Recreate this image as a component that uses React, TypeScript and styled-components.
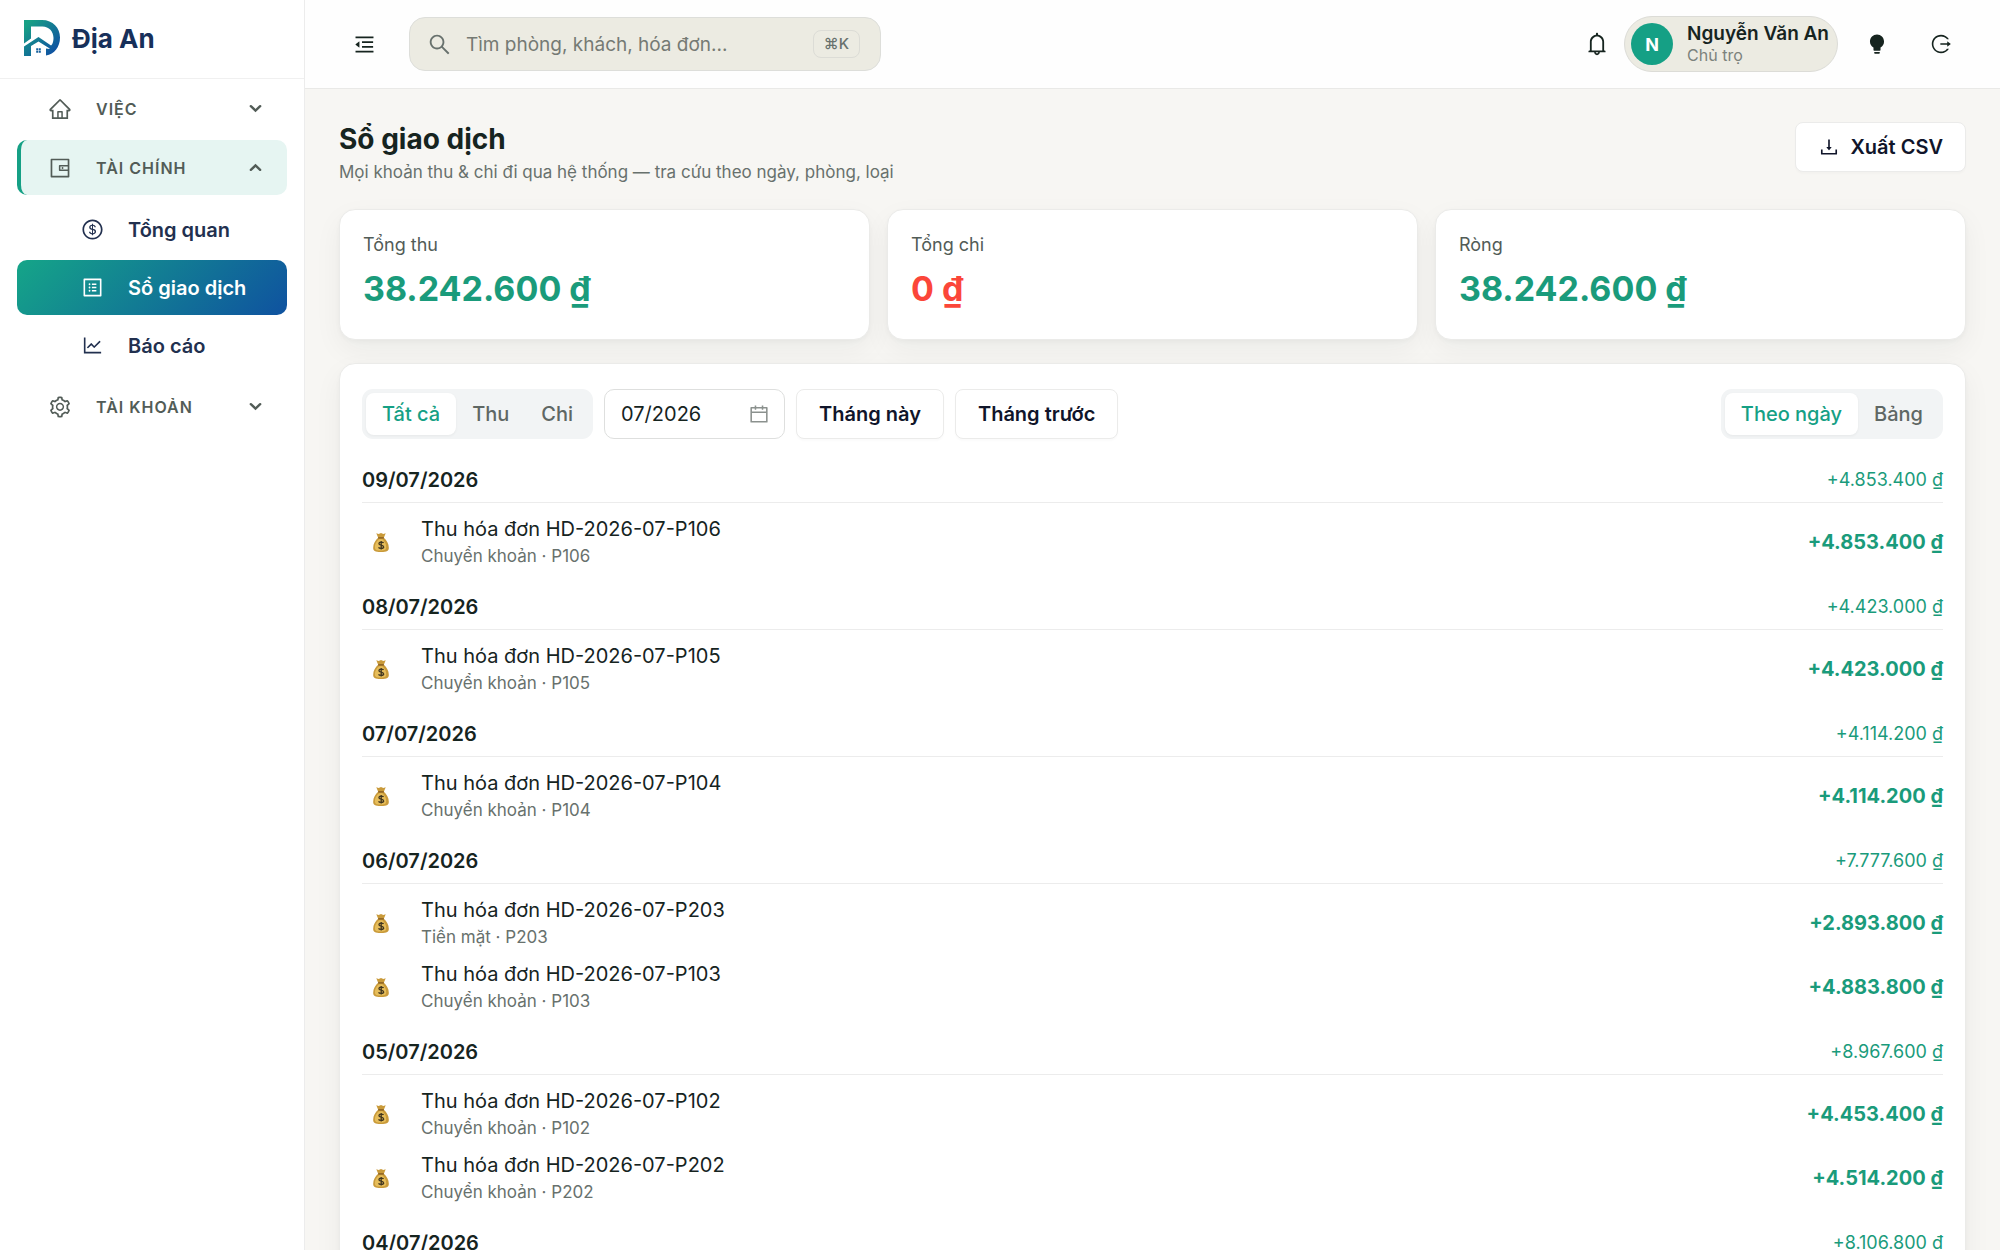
import React from 'react';
import styled, { createGlobalStyle } from 'styled-components';
import {
  AiOutlineHome, AiOutlineWallet, AiOutlineDollarCircle, AiOutlineProfile, AiOutlineLineChart,
  AiOutlineSetting, AiOutlineMenuFold, AiOutlineSearch, AiOutlineBell, AiFillBulb, AiOutlineLogout,
  AiOutlineDownload, AiOutlineCalendar,
} from 'react-icons/ai';

const c = {
  green: '#15a085',
  income: '#1a9b7b',
  danger: '#fb4639',
  ink: '#16241f',
  navy: '#22304f',
  muted: '#68716d',
  soft: '#525c57',
  line: '#ececec',
  page: '#f7f6f3',
  chip: '#ecebe2',
};

const GlobalStyle = createGlobalStyle`
  *, *::before, *::after { box-sizing: border-box; }
  body { margin: 0; background: ${c.page}; color: ${c.ink}; font-family: Inter, "Noto Sans", sans-serif; font-size: 18px; }
  button, input { font: inherit; color: inherit; }
  button { cursor: pointer; }
  h1, h2, p, ul { margin: 0; padding: 0; }
  ul { list-style: none; }
  svg { display: block; flex: none; }
`;

const Shell = styled.div`
  display: grid;
  grid-template-columns: 305px minmax(0, 1fr);
  height: 100vh;
  overflow: hidden;
`;

const Sidebar = styled.aside`
  background: #fff;
  border-right: 1px solid ${c.line};
`;

const Brand = styled.a`
  display: flex;
  align-items: center;
  gap: 12px;
  height: 79px;
  padding: 0 24px 2px;
  border-bottom: 1px solid #f0f0f0;
  color: #17305a;
  font-size: 26px;
  font-weight: 700;
  text-decoration: none;
`;

const Menu = styled.ul`
  display: flex;
  flex-direction: column;
  gap: 4px;
  && { padding: 2px 17px; }
`;

const SubMenu = styled.ul`
  display: flex;
  flex-direction: column;
  gap: 3px;
  && { padding: 7px 0 2px; }
`;

const GroupButton = styled.button<{ $open?: boolean }>`
  display: flex;
  align-items: center;
  width: 100%;
  height: 55px;
  padding: 0 25px 0 27px;
  border: 0;
  border-left: 4px solid ${p => (p.$open ? c.green : 'transparent')};
  border-radius: 10px;
  background: ${p => (p.$open ? '#e6f5f2' : 'transparent')};
  color: ${c.soft};
  font-size: 16px;
  font-weight: 600;
  letter-spacing: 1px;
  text-align: left;
`;

const GroupLabel = styled.span`
  flex: 1;
  margin-left: 24px;
`;

const SubLink = styled.a<{ $active?: boolean }>`
  display: flex;
  align-items: center;
  gap: 24px;
  height: 55px;
  padding-left: 64px;
  border-radius: 10px;
  background: ${p => (p.$active ? 'linear-gradient(135deg, #15a588 0%, #0f52a0 100%)' : 'transparent')};
  color: ${p => (p.$active ? '#fff' : c.navy)};
  font-size: 20px;
  font-weight: 600;
  text-decoration: none;
`;

const Body = styled.div`
  display: flex;
  flex-direction: column;
  min-width: 0;
  min-height: 0;
`;

const Topbar = styled.header`
  display: flex;
  align-items: center;
  height: 89px;
  flex: none;
  padding: 0 34px;
  background: #fefefe;
  border-bottom: 1px solid #e9e9e7;
`;

const Actions = styled.div`
  display: flex;
  align-items: center;
  gap: 14px;
`;

const Account = styled.div`
  display: flex;
  align-items: center;
  gap: 2px;
`;

const IconButton = styled.button`
  display: grid;
  place-items: center;
  width: 50px;
  height: 50px;
  padding: 0;
  border: 0;
  background: none;
`;

const Search = styled.label`
  display: flex;
  align-items: center;
  gap: 14px;
  width: 472px;
  height: 54px;
  margin: 0 auto 0 20px;
  padding: 0 20px 0 17px;
  border: 1px solid #dddeda;
  border-radius: 16px;
  background: ${c.chip};
  color: ${c.muted};
`;

const SearchInput = styled.input`
  flex: 1;
  min-width: 0;
  padding: 0;
  border: 0;
  outline: 0;
  background: none;
  font-size: 19px;
  &::placeholder { color: #757a74; opacity: 1; }
`;

const Key = styled.kbd`
  padding: 4px 10px;
  border: 1px solid #dcdcd6;
  border-radius: 8px;
  font: 500 15px/18px Inter, "DejaVu Sans", sans-serif;
`;

const UserChip = styled.button`
  display: flex;
  align-items: center;
  gap: 14px;
  height: 56px;
  padding: 0 8px 0 6px;
  border: 1px solid #dcdcd7;
  border-radius: 28px;
  background: ${c.chip};
  text-align: left;
`;

const Avatar = styled.span`
  display: grid;
  place-items: center;
  width: 42px;
  height: 42px;
  border-radius: 50%;
  background: ${c.green};
  color: #fff;
  font-size: 18px;
  font-weight: 700;
`;

const UserText = styled.span`
  display: flex;
  flex-direction: column;
  font-size: 19px;
  line-height: 22px;
  font-weight: 600;
`;

const Role = styled.small`
  color: #7c827c;
  font-size: 16px;
  line-height: 20px;
  font-weight: 400;
`;

const Main = styled.main`
  display: flex;
  flex-direction: column;
  padding: 33px 34px 0;
`;

const PageHead = styled.div`
  display: flex;
  justify-content: space-between;
  align-items: flex-start;
  margin-bottom: 25px;
`;

const Title = styled.h1`
  font-size: 28px;
  line-height: 34px;
  font-weight: 700;
`;

const Subtitle = styled.p`
  margin-top: 4px;
  color: ${c.muted};
  font-size: 17px;
  line-height: 24px;
`;

const Button = styled.button`
  display: flex;
  align-items: center;
  justify-content: center;
  gap: 10px;
  height: 50px;
  padding: 0 22px;
  border: 1px solid #ebebea;
  border-radius: 8px;
  background: #fff;
  box-shadow: 0 2px 2px rgba(0, 0, 0, 0.02);
  color: #10152a;
  font-size: 20px;
  font-weight: 600;
  white-space: nowrap;
`;

const Stats = styled.section`
  display: grid;
  grid-template-columns: repeat(3, minmax(0, 1fr));
  gap: 17px;
  margin-bottom: 23px;
`;

const Card = styled.section`
  border: 1px solid #ebebe9;
  border-radius: 16px;
  background: #fff;
  box-shadow: 0 2px 4px rgba(20, 40, 30, 0.03), 0 10px 28px rgba(20, 40, 30, 0.05);
`;

const StatCard = styled(Card)`
  height: 131px;
  padding: 22px 23px;
`;

const StatLabel = styled.p`
  color: ${c.soft};
  font-size: 18px;
  line-height: 26px;
`;

const StatValue = styled.p<{ $tone: string }>`
  margin-top: 9px;
  color: ${p => p.$tone};
  font-size: 34px;
  line-height: 44px;
  font-weight: 700;
`;

const Ledger = styled(Card)`
  padding: 25px 22px;
`;

const Toolbar = styled.div`
  display: flex;
  align-items: center;
  gap: 11px;
  margin-bottom: 24px;
`;

const Segmented = styled.div<{ $end?: boolean }>`
  display: flex;
  height: 50px;
  margin-left: ${p => (p.$end ? 'auto' : '0')};
  padding: 4px;
  border-radius: 11px;
  background: #f2f4f5;
`;

const Segment = styled.button<{ $on?: boolean }>`
  padding: 0 16px;
  border: 0;
  border-radius: 8px;
  background: ${p => (p.$on ? '#fff' : 'transparent')};
  box-shadow: ${p => (p.$on ? '0 1px 3px rgba(0, 0, 0, 0.05)' : 'none')};
  color: ${p => (p.$on ? c.green : '#5f6764')};
  font-size: 20px;
  font-weight: 500;
`;

const MonthField = styled.label`
  display: flex;
  align-items: center;
  width: 181px;
  height: 50px;
  padding: 0 14px 0 16px;
  border: 1px solid #dedfde;
  border-radius: 10px;
  color: #8b918e;
`;

const MonthInput = styled.input`
  flex: 1;
  min-width: 0;
  padding: 0;
  border: 0;
  outline: 0;
  background: none;
  color: ${c.ink};
  font-size: 20px;
`;

const Day = styled.section`
  margin-bottom: 16px;
`;

const DayHead = styled.div`
  display: flex;
  justify-content: space-between;
  align-items: center;
  height: 40px;
  padding-bottom: 6px;
  margin-bottom: 7px;
  border-bottom: 1px solid ${c.line};
`;

const DayTitle = styled.h2`
  font-size: 20px;
  font-weight: 600;
`;

const DayTotal = styled.span`
  color: ${c.income};
  font-size: 18px;
`;

const Entry = styled.li`
  display: flex;
  align-items: center;
  height: 64px;
`;

const EntryIcon = styled.span`
  display: grid;
  place-items: center;
  width: 37px;
  margin-right: 22px;
`;

const EntryText = styled.div`
  flex: 1;
`;

const EntryTitle = styled.p`
  font-size: 20px;
  line-height: 28px;
`;

const EntryMeta = styled.p`
  color: ${c.muted};
  font-size: 17px;
  line-height: 26px;
`;

const EntryAmount = styled.strong`
  color: ${c.income};
  font-size: 20px;
  font-weight: 700;
`;

function Logo() {
  return (
    <svg width="36" height="36" viewBox="0 0 36 36" aria-hidden="true">
      <defs>
        <linearGradient id="brand" x1="0" y1="0" x2="1" y2="1">
          <stop offset="0.1" stopColor="#17a085" />
          <stop offset="0.9" stopColor="#0f4fa3" />
        </linearGradient>
      </defs>
      <path
        fill="url(#brand)"
        d="M0 0H18C29 0 36 8 36 17.500C36 27 30.500 34 22 35.500V28.500L25.500 29V27L28 24.500C29.200 22.500 29.500 20 29.500 18C29.500 11.500 25 6.500 18.500 6.500H7V18.500L0 23.500ZM0 26.500L14.500 17L28.500 26.500L26.500 29L14.500 21.500L7 26V36H0Z"
      />
      <path fill="#155f9c" d="M12.200 28.200h2v2h-2zM14.800 28.200h2v2h-2zM12.200 30.800h2v2h-2zM14.800 30.800h2v2h-2z" />
    </svg>
  );
}

function Chevron({ up = false }: { up?: boolean }) {
  return (
    <svg width="13" height="13" viewBox="0 0 14 14" fill="none" stroke="currentColor" strokeWidth="2.600" strokeLinecap="round" aria-hidden="true">
      <path d={up ? 'M2 9.500L7 4.800L12 9.500' : 'M2 4.500L7 9.200L12 4.500'} />
    </svg>
  );
}

function MoneyBag() {
  return (
    <svg width="16" height="21" viewBox="0 0 17 21" aria-hidden="true">
      <path fill="#c99a3a" d="M3.500 .8L6 1.500L8.500 .5L11 1.500L13.500 .8L11.500 5.500C14.500 8 16.800 12 16.800 16C16.800 19.500 15 20.500 8.500 20.500S.2 19.500 .2 16C.2 12 2.500 8 5.500 5.500Z" />
      <path fill="#e6bd5a" d="M6.500 7C3.500 9 2 12.500 2 15.500C2 18.500 4 19 8.500 19S14 18 14 15C14 12 12 8.500 10 7Z" />
      <path stroke="#8a5f22" strokeWidth="1.500" d="M5.500 5.600H11.500" />
      <path fill="none" stroke="#40351f" strokeWidth="1.400" d="M11.200 11C10.500 9.900 6.300 9.700 6.300 11.700C6.300 13.900 11.300 12.800 11.300 15.200C11.300 17.200 6.700 17.200 5.900 15.700M8.700 8.800V18" />
    </svg>
  );
}

type Item = { room: string; method: string; amount: string };
type DayGroup = { date: string; total: string; items: Item[] };

const days: DayGroup[] = [
  { date: '09/07/2026', total: '4.853.400', items: [{ room: 'P106', method: 'Chuyển khoản', amount: '4.853.400' }] },
  { date: '08/07/2026', total: '4.423.000', items: [{ room: 'P105', method: 'Chuyển khoản', amount: '4.423.000' }] },
  { date: '07/07/2026', total: '4.114.200', items: [{ room: 'P104', method: 'Chuyển khoản', amount: '4.114.200' }] },
  {
    date: '06/07/2026', total: '7.777.600', items: [
      { room: 'P203', method: 'Tiền mặt', amount: '2.893.800' },
      { room: 'P103', method: 'Chuyển khoản', amount: '4.883.800' },
    ],
  },
  {
    date: '05/07/2026', total: '8.967.600', items: [
      { room: 'P102', method: 'Chuyển khoản', amount: '4.453.400' },
      { room: 'P202', method: 'Chuyển khoản', amount: '4.514.200' },
    ],
  },
  { date: '04/07/2026', total: '8.106.800', items: [] },
];

const stats = [
  { label: 'Tổng thu', value: '38.242.600 ₫', tone: c.income },
  { label: 'Tổng chi', value: '0 ₫', tone: c.danger },
  { label: 'Ròng', value: '38.242.600 ₫', tone: c.income },
];

export default function App() {
  return (
    <>
      <GlobalStyle />
      <Shell>
        <Sidebar>
          <Brand href="#"><Logo />Địa An</Brand>
          <nav>
            <Menu>
              <li><GroupButton><AiOutlineHome size={24} /><GroupLabel>VIỆC</GroupLabel><Chevron /></GroupButton></li>
              <li>
                <GroupButton $open aria-expanded="true"><AiOutlineWallet size={24} /><GroupLabel>TÀI CHÍNH</GroupLabel><Chevron up /></GroupButton>
                <SubMenu>
                  <li><SubLink href="#tong-quan"><AiOutlineDollarCircle size={23} />Tổng quan</SubLink></li>
                  <li><SubLink href="#so-giao-dich" $active aria-current="page"><AiOutlineProfile size={23} />Sổ giao dịch</SubLink></li>
                  <li><SubLink href="#bao-cao"><AiOutlineLineChart size={23} />Báo cáo</SubLink></li>
                </SubMenu>
              </li>
              <li><GroupButton><AiOutlineSetting size={24} /><GroupLabel>TÀI KHOẢN</GroupLabel><Chevron /></GroupButton></li>
            </Menu>
          </nav>
        </Sidebar>
        <Body>
          <Topbar>
            <IconButton aria-label="Thu gọn menu"><AiOutlineMenuFold size={23} /></IconButton>
            <Search>
              <AiOutlineSearch size={25} />
              <SearchInput type="search" aria-label="Tìm kiếm" placeholder="Tìm phòng, khách, hóa đơn..." />
              <Key>⌘K</Key>
            </Search>
            <Actions>
              <Account>
                <IconButton aria-label="Thông báo"><AiOutlineBell size={26} /></IconButton>
                <UserChip>
                  <Avatar>N</Avatar>
                  <UserText>Nguyễn Văn An<Role>Chủ trọ</Role></UserText>
                </UserChip>
              </Account>
              <IconButton aria-label="Giao diện"><AiFillBulb size={22} /></IconButton>
              <IconButton aria-label="Đăng xuất"><AiOutlineLogout size={22} /></IconButton>
            </Actions>
          </Topbar>
          <Main>
            <PageHead>
              <div>
                <Title>Sổ giao dịch</Title>
                <Subtitle>Mọi khoản thu &amp; chi đi qua hệ thống — tra cứu theo ngày, phòng, loại</Subtitle>
              </div>
              <Button><AiOutlineDownload size={22} />Xuất CSV</Button>
            </PageHead>
            <Stats>
              {stats.map(s => (
                <StatCard key={s.label}>
                  <StatLabel>{s.label}</StatLabel>
                  <StatValue $tone={s.tone}>{s.value}</StatValue>
                </StatCard>
              ))}
            </Stats>
            <Ledger>
              <Toolbar>
                <Segmented>
                  <Segment $on>Tất cả</Segment>
                  <Segment>Thu</Segment>
                  <Segment>Chi</Segment>
                </Segmented>
                <MonthField>
                  <MonthInput aria-label="Tháng" defaultValue="07/2026" />
                  <AiOutlineCalendar size={22} />
                </MonthField>
                <Button>Tháng này</Button>
                <Button>Tháng trước</Button>
                <Segmented $end>
                  <Segment $on>Theo ngày</Segment>
                  <Segment>Bảng</Segment>
                </Segmented>
              </Toolbar>
              {days.map(d => (
                <Day key={d.date}>
                  <DayHead>
                    <DayTitle>{d.date}</DayTitle>
                    <DayTotal>+{d.total} ₫</DayTotal>
                  </DayHead>
                  <ul>
                    {d.items.map(i => (
                      <Entry key={i.room}>
                        <EntryIcon><MoneyBag /></EntryIcon>
                        <EntryText>
                          <EntryTitle>Thu hóa đơn HD-2026-07-{i.room}</EntryTitle>
                          <EntryMeta>{i.method} · {i.room}</EntryMeta>
                        </EntryText>
                        <EntryAmount>+{i.amount} ₫</EntryAmount>
                      </Entry>
                    ))}
                  </ul>
                </Day>
              ))}
            </Ledger>
          </Main>
        </Body>
      </Shell>
    </>
  );
}
